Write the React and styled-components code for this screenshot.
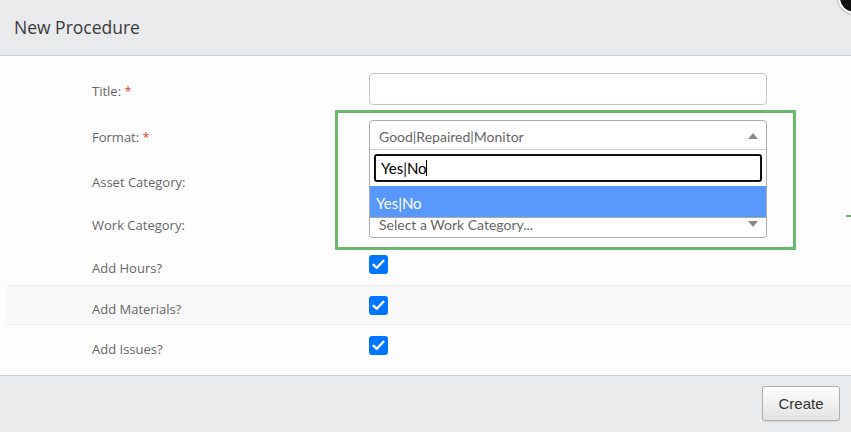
import React from 'react'
import styled, { createGlobalStyle } from 'styled-components'

const GlobalStyle = createGlobalStyle`
	html, body {
		margin: 0;
		padding: 0;
		background: #fdfdfd;
		overflow: hidden;
	}
	#root {
		height: 432px;
	}
	* {
		box-sizing: border-box;
	}
`

//modal shell
const Modal = styled.div`
	position: relative;
	width: 851px;
	height: 432px;
	display: flex;
	flex-direction: column;
	font-family: 'Open Sans', 'Noto Sans', sans-serif;
	overflow: hidden;
`

const Header = styled.div`
	height: 56px;
	flex-shrink: 0;
	background: #e9eaec;
	border-bottom: 1px solid #cbcbcb;
	display: flex;
	align-items: center;
	padding: 0 14px 2px;
	font-size: 17.5px;
	color: #3a3a3a;
`

const CloseButton = styled.div`
	position: absolute;
	top: -19px;
	right: -20px;
	width: 33px;
	height: 33px;
	border-radius: 50%;
	background: #111;
	border: 2px solid #fff;
	box-shadow: 0 0 3px rgba(0, 0, 0, 0.4);
`

const Body = styled.div`
	position: relative;
	flex: 1;
	background: #fdfdfd;
	padding: 10px 0 10px 7px;
`

const Row = styled.div`
	display: flex;
	align-items: center;
	height: ${p => p.$h}px;
	padding-left: 85px;
	background: ${p => (p.$striped ? '#f8f8f8' : 'transparent')};
	border-top: 1px solid ${p => (p.$striped ? '#ececec' : 'transparent')};
	border-bottom: 1px solid ${p => (p.$striped ? '#ececec' : 'transparent')};
`

const Label = styled.div`
	width: 277px;
	flex-shrink: 0;
	font-size: 13px;
	color: #666;
	padding-top: ${p => (p.$check ? 7 : 3)}px;
`

const Required = styled.span`
	color: #e0443a;
`

const Control = styled.div`
	position: relative;
	width: 398px;
`

const TextInput = styled.div`
	height: 32px;
	border: 1px solid #c4c4c4;
	border-radius: 4px;
	background: #fff;
`

const SelectBox = styled.div`
	height: 30px;
	border: 1px solid #aaa;
	border-radius: ${p => (p.$open ? '4px 4px 0 0' : '4px')};
	background: #fff;
	display: flex;
	align-items: center;
	justify-content: space-between;
	padding: 2px 8px 0 9px;
	font-family: Lato, 'Open Sans', sans-serif;
	font-size: 14px;
	color: #666;
`

const Arrow = styled.span`
	width: 0;
	height: 0;
	border-left: 5px solid transparent;
	border-right: 5px solid transparent;
	${p => (p.$up ? 'border-bottom: 6px solid #888;' : 'border-top: 6px solid #888;')}
`

const Dropdown = styled.div`
	position: absolute;
	top: 29px;
	left: 0;
	right: 0;
	z-index: 2;
	background: #fff;
	border: 1px solid #aaa;
	border-top: 1px solid #d0d0d0;
	padding-top: 4px;
`

const SearchBox = styled.div`
	margin: 0 4px 4px;
	height: 28px;
	border: 2px solid #111;
	border-radius: 3px;
	display: flex;
	align-items: center;
	padding-left: 5px;
	font-family: Lato, 'Open Sans', sans-serif;
	font-size: 15px;
	color: #000;
`

const Caret = styled.span`
	display: inline-block;
	width: 1px;
	height: 16px;
	background: #000;
	margin-left: -1px;
`

const Option = styled.div`
	height: 31px;
	background: #5897fb;
	color: #fff;
	display: flex;
	align-items: center;
	padding: 3px 0 0 6px;
	font-family: Lato, 'Open Sans', sans-serif;
	font-size: 15px;
`

const CheckBox = styled.span`
	width: 19px;
	height: 19px;
	border-radius: 3px;
	background: #0075ff;
	display: flex;
	align-items: center;
	justify-content: center;
`

const Highlight = styled.div`
	position: absolute;
	left: 335px;
	top: 54px;
	width: 461px;
	height: 140px;
	border: 3px solid #6bb96f;
	pointer-events: none;
	z-index: 3;
`

const Tick = styled.div`
	position: absolute;
	right: 0;
	top: 159px;
	width: 5px;
	height: 2px;
	background: #6bb96f;
`

const Footer = styled.div`
	height: 57px;
	flex-shrink: 0;
	background: #e9eaec;
	border-top: 1px solid #cbcbcb;
	display: flex;
	justify-content: flex-end;
	align-items: flex-start;
	padding: 10px 11px 0 0;
`

const Button = styled.button`
	width: 78px;
	height: 35px;
	border: 1px solid #adadad;
	border-radius: 3px;
	background: linear-gradient(#fefefe, #e2e2e2);
	font-family: 'Liberation Sans', Arial, sans-serif;
	font-size: 15px;
	color: #333;
	padding: 0;
	box-shadow: 0 1px 1px rgba(0, 0, 0, 0.08);
`

const Check = () => (
	<CheckBox>
		<svg width="13" height="11" viewBox="0 0 13 11">
			<path d="M1.6 5.8 L4.8 8.8 L11.4 1.8" fill="none" stroke="#fff" strokeWidth="2.4" strokeLinecap="round" strokeLinejoin="round" />
		</svg>
	</CheckBox>
)

const App = () => {
	const checks = [
		{ label: 'Add Hours?', h: 41 },
		{ label: 'Add Materials?', h: 40, striped: true },
		{ label: 'Add Issues?', h: 40 }
	]

	return (
		<>
			<GlobalStyle />
			<Modal>
				<Header>New Procedure</Header>
				<CloseButton />
				<Body>
					<Row $h={46}>
						<Label>
							Title: <Required>*</Required>
						</Label>
						<Control>
							<TextInput />
						</Control>
					</Row>
					<Row $h={46}>
						<Label>
							Format: <Required>*</Required>
						</Label>
						<Control>
							<SelectBox $open>
								<span>Good|Repaired|Monitor</span>
								<Arrow $up />
							</SelectBox>
							<Dropdown>
								<SearchBox>
									Yes|No
									<Caret />
								</SearchBox>
								<Option>Yes|No</Option>
							</Dropdown>
						</Control>
					</Row>
					<Row $h={44}>
						<Label>Asset Category:</Label>
						<Control>
							{/* hidden under the open dropdown */}
							<SelectBox>
								<span />
								<Arrow />
							</SelectBox>
						</Control>
					</Row>
					<Row $h={42}>
						<Label>Work Category:</Label>
						<Control>
							<SelectBox>
								<span>Select a Work Category...</span>
								<Arrow />
							</SelectBox>
						</Control>
					</Row>
					{checks.map(c => (
						<Row key={c.label} $h={c.h} $striped={c.striped}>
							<Label $check>{c.label}</Label>
							<Control>
								<Check />
							</Control>
						</Row>
					))}
					<Highlight />
					<Tick />
				</Body>
				<Footer>
					<Button>Create</Button>
				</Footer>
			</Modal>
		</>
	)
}

export default App
